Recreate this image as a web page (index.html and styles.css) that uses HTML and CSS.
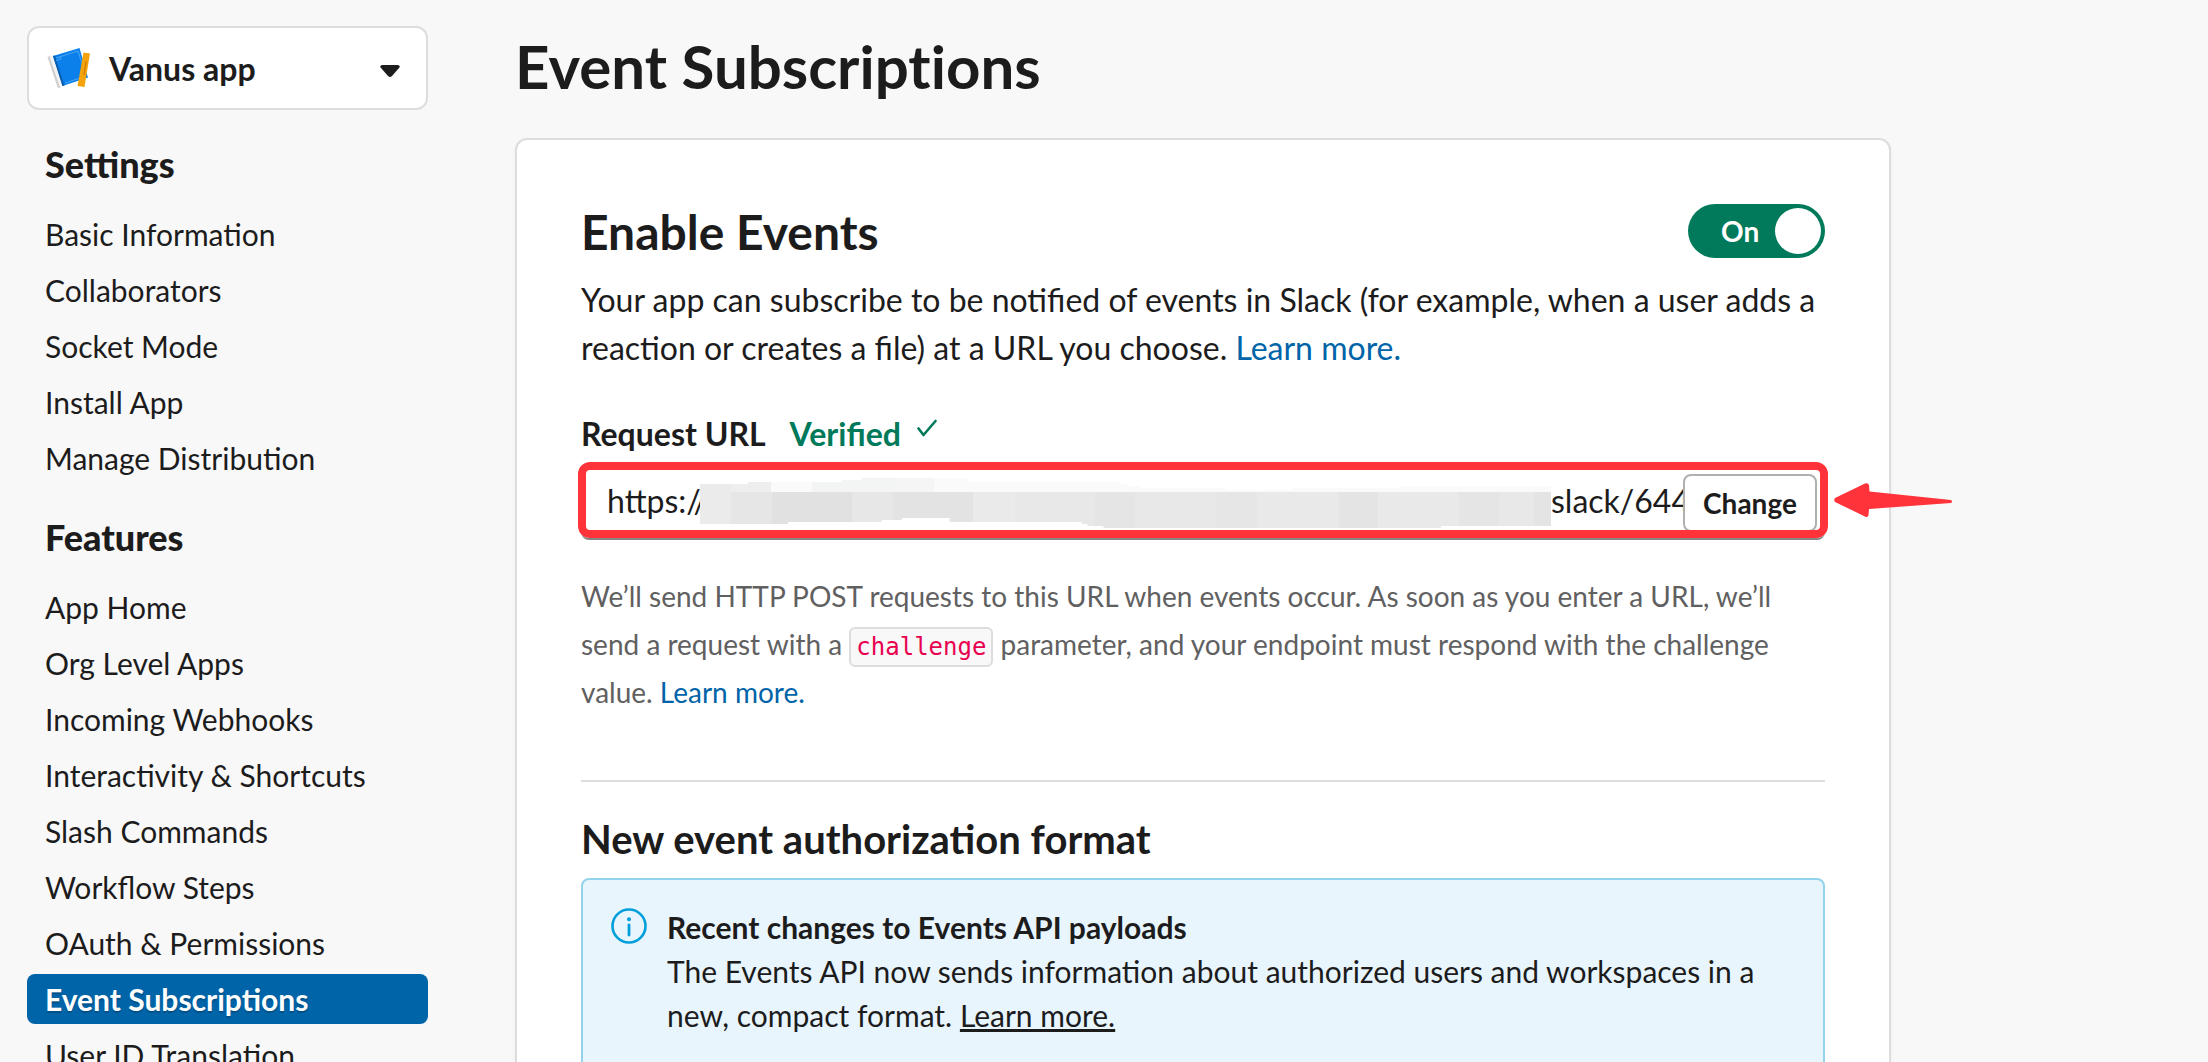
FILE: index.html
```html
<!DOCTYPE html>
<html lang="en">
<head>
<meta charset="utf-8">
<title>Event Subscriptions</title>
<link rel="stylesheet" href="styles.css">
</head>
<body>
<div class="page">
  <aside class="sidebar">
    <button class="app-picker" type="button">
      <svg class="app-icon" viewBox="0 0 44 44" aria-hidden="true">
        <path d="M0.500 11L4 9.500L15.500 39L12.500 42Q11 42.500 10.500 41Z" fill="#cfcfcf"/>
        <path d="M2.500 10.500L5.500 9.500L16 39.500L13 41.500Z" fill="#f3f3f3"/>
        <path d="M6 10L32.500 2L41 31.500L15.500 40Z" fill="#0b80ea"/>
        <path d="M6 10L7.800 9.500L17.500 39.500L15.500 40Z" fill="#0b5cad"/>
        <path d="M9 12L31 5L39 30L18 37M9 14.500L14 13L13 11" fill="none" stroke="#63b4f5" stroke-width="0.700"/>
        <path d="M36.500 6.500L43 7.500L37.500 41L30.500 40Z" fill="#f5a30a"/>
        <path d="M38.500 15L39.800 15.200L37.500 29L36.200 28.800Z" fill="#d07e08"/>
      </svg>
      <span>Vanus app</span>
      <svg class="caret" viewBox="0 0 20 12" aria-hidden="true">
        <path d="M2 0H18Q21 1 19 3L12 11Q10 13 8 11L1 3Q-1 1 2 0Z" fill="#1d1c1d"/>
      </svg>
    </button>

    <nav class="nav" aria-label="App configuration">
      <h2 class="nav-title">Settings</h2>
      <ul class="nav-list">
        <li><a class="nav-link" href="#">Basic Information</a></li>
        <li><a class="nav-link" href="#">Collaborators</a></li>
        <li><a class="nav-link" href="#">Socket Mode</a></li>
        <li><a class="nav-link" href="#">Install App</a></li>
        <li><a class="nav-link" href="#">Manage Distribution</a></li>
      </ul>
      <h2 class="nav-title">Features</h2>
      <ul class="nav-list">
        <li><a class="nav-link" href="#">App Home</a></li>
        <li><a class="nav-link" href="#">Org Level Apps</a></li>
        <li><a class="nav-link" href="#">Incoming Webhooks</a></li>
        <li><a class="nav-link" href="#">Interactivity &amp; Shortcuts</a></li>
        <li><a class="nav-link" href="#">Slash Commands</a></li>
        <li><a class="nav-link" href="#">Workflow Steps</a></li>
        <li><a class="nav-link" href="#">OAuth &amp; Permissions</a></li>
        <li><a class="nav-link nav-link--active" href="#" aria-current="page">Event Subscriptions</a></li>
        <li><a class="nav-link" href="#">User ID Translation</a></li>
      </ul>
    </nav>
  </aside>

  <main class="main">
    <h1 class="page-title">Event Subscriptions</h1>
    <section class="card">
      <div class="card-head">
        <h2 class="card-title">Enable Events</h2>
        <label class="toggle">
          <input class="toggle-input" type="checkbox" role="switch" checked aria-label="Enable Events">
          <span class="toggle-text">On</span>
          <span class="toggle-knob"></span>
        </label>
      </div>
      <p class="intro">Your app can subscribe to be notified of events in Slack (for example, when a user adds a reaction or creates a file) at a URL you choose. <a class="link" href="#">Learn more.</a></p>

      <div class="field-label">
        <label for="request-url">Request URL</label>
        <span class="verified">Verified</span>
        <svg class="check" viewBox="0 0 20 18" aria-hidden="true">
          <path d="M1.500 9.500L6.500 16L18.500 2" fill="none" stroke="#007a5a" stroke-width="2.600" stroke-linecap="round" stroke-linejoin="round"/>
        </svg>
      </div>
      <div class="field">
        <input class="url-input" id="request-url" type="text" value="https://" readonly>
        <svg class="redaction" viewBox="700 480 852 50" preserveAspectRatio="none" shape-rendering="crispEdges" aria-hidden="true">
          <defs>
            <clipPath id="redaction-outline">
              <path d="M700 486H748V484H842V482H862V480H968V484H1120V486H1128V488H1142V490H1226V492H1294V490H1402V488H1552V528H1442V530H1104V528H1088V526H1082V524H950V520H902V522H882V524H788V526H700Z"/>
            </clipPath>
          </defs>
          <g clip-path="url(#redaction-outline)">
            <rect x="700" y="480" width="852" height="50" fill="#fafafa"/>
            <rect x="700" y="480" width="71" height="50" fill="#eeeeee"/>
            <rect x="812" y="480" width="82" height="20" fill="#f3f4f4"/>
            <rect x="894" y="480" width="40" height="20" fill="#f5f5f5"/>
            <rect x="700" y="486" width="31" height="44" fill="#ebebeb"/>
            <rect x="731" y="494" width="41" height="36" fill="#e6e6e6"/>
            <rect x="772" y="494" width="80" height="36" fill="#e1e1e1"/>
            <rect x="852" y="494" width="41" height="36" fill="#e7e7e7"/>
            <rect x="893" y="494" width="80" height="36" fill="#e3e3e3"/>
            <rect x="973" y="494" width="42" height="36" fill="#eaeaea"/>
            <rect x="1015" y="494" width="80" height="36" fill="#e8e8e8"/>
            <rect x="1095" y="494" width="41" height="36" fill="#e5e5e5"/>
            <rect x="1136" y="494" width="81" height="36" fill="#e8e8e8"/>
            <rect x="1217" y="494" width="41" height="36" fill="#e6e6e6"/>
            <rect x="1258" y="494" width="82" height="36" fill="#e9e9e9"/>
            <rect x="1340" y="494" width="39" height="36" fill="#e4e4e4"/>
            <rect x="1379" y="494" width="81" height="36" fill="#e9e9e9"/>
            <rect x="1460" y="494" width="40" height="36" fill="#e5e5e5"/>
            <rect x="1500" y="494" width="35" height="36" fill="#e8e8e8"/>
            <rect x="1535" y="494" width="17" height="36" fill="#e4e4e4"/>
          </g>
        </svg>
        <span class="url-tail">slack/644</span>
        <button class="change" type="button">Change</button>
        <div class="highlight"></div>
        <svg class="arrow" viewBox="0 0 120 36" aria-hidden="true">
          <path d="M1 16L31 1.500Q34 0.500 35 3L35.500 9.500L117 18Q119 19.500 117 21L35 27L34.500 33Q34 36 31 34.500L1 20Q-0.500 18 1 16Z" fill="#ff3339"/>
        </svg>
      </div>
      <p class="hint">We’ll send HTTP POST requests to this URL when events occur. As soon as you enter a URL, we’ll send a request with a <code class="code">challenge</code> parameter, and your endpoint must respond with the challenge value. <a class="link" href="#">Learn more.</a></p>

      <hr class="divider">

      <h3 class="section-title">New event authorization format</h3>
      <div class="notice">
        <svg class="info" viewBox="0 0 36 36" aria-hidden="true">
          <circle cx="18" cy="18" r="16.500" fill="none" stroke="#009fdb" stroke-width="2.600"/>
          <circle cx="18" cy="11.200" r="2" fill="#009fdb"/>
          <path d="M18 17V27" stroke="#009fdb" stroke-width="2.800" stroke-linecap="round"/>
        </svg>
        <div>
          <strong class="notice-title">Recent changes to Events API payloads</strong>
          <p class="notice-text">The Events API now sends information about authorized users and workspaces in a new, compact format. <a class="notice-link" href="#">Learn more.</a></p>
        </div>
      </div>
    </section>
  </main>
</div>
</body>
</html>
```
FILE: styles.css
```css
* {
  box-sizing: border-box;
}

body {
  margin: 0;
  background: #f8f8f8;
  color: #1d1c1d;
  font-family: Lato, "Open Sans", sans-serif;
  font-size: 32px;
}

h1, h2, h3, p, ul {
  margin: 0;
}

button, input {
  font-family: inherit;
  color: inherit;
}

.page {
  display: flex;
  gap: 87px;
  height: 100vh;
  padding: 26px 27px 0;
  overflow: hidden;
}

/* Sidebar */
.sidebar {
  flex: 0 0 401px;
}

.app-picker {
  display: flex;
  align-items: center;
  gap: 18px;
  width: 100%;
  height: 84px;
  padding: 0 26px 0 18px;
  border: 2px solid #dddddd;
  border-radius: 12px;
  background: #ffffff;
  font-size: 32px;
  font-weight: 700;
}

.app-icon {
  width: 44px;
  height: 44px;
}

.caret {
  width: 20px;
  height: 12px;
  margin-top: 6px;
  margin-left: auto;
}

.nav-title {
  padding: 30px 18px 21px;
  font-size: 36px;
  font-weight: 900;
  line-height: 48px;
}

.nav-list {
  display: grid;
  gap: 6px;
  padding: 0;
  list-style: none;
}

.nav-link {
  display: block;
  padding: 0 18px;
  border-radius: 8px;
  color: inherit;
  font-size: 30px;
  line-height: 50px;
  text-decoration: none;
}

.nav-link--active {
  background: #0064a8;
  color: #ffffff;
  font-weight: 700;
  text-shadow: 0 2px 1px rgba(0, 0, 0, 0.2);
}

/* Main column */
.main {
  flex: 1;
  min-width: 0;
  max-width: 1376px;
}

.page-title {
  margin-bottom: 32px;
  font-size: 60px;
  font-weight: 700;
  line-height: 80px;
  font-variant-ligatures: none;
}

.card {
  padding: 64px;
  border: 2px solid #dddddd;
  border-radius: 12px;
  background: #ffffff;
  box-shadow: 0 2px 4px rgba(0, 0, 0, 0.04);
}

.card-head {
  display: flex;
  align-items: flex-start;
  justify-content: space-between;
}

.card-title {
  font-size: 48px;
  font-weight: 700;
  line-height: 56px;
}

.toggle {
  display: flex;
  align-items: center;
  justify-content: space-between;
  position: relative;
  width: 137px;
  height: 54px;
  padding: 0 4px 0 33px;
  border-radius: 27px;
  background: #007a5a;
  color: #ffffff;
  font-size: 28px;
  font-weight: 700;
}

.toggle-input {
  position: absolute;
  inset: 0;
  margin: 0;
  opacity: 0;
}

.toggle-knob {
  width: 46px;
  height: 46px;
  border-radius: 50%;
  background: #ffffff;
}

.intro {
  margin-top: 16px;
  line-height: 48px;
}

.link {
  color: #0064a8;
  text-decoration: none;
}

.field-label {
  display: flex;
  gap: 16px;
  margin-top: 38px;
  margin-bottom: 6px;
  font-weight: 700;
  line-height: 48px;
}

.verified {
  margin-left: 8px;
  color: #007a5a;
}

.check {
  width: 20px;
  height: 18px;
  margin-top: 9px;
}

.field {
  display: flex;
  align-items: center;
  position: relative;
  height: 76px;
  padding: 0 8px 0 26px;
  border-radius: 8px;
  border-bottom: 2px solid #868686;
  line-height: 48px;
}

.url-input {
  width: 93px;
  padding: 0;
  border: 0;
  background: transparent;
  font-size: 32px;
  line-height: 48px;
}

.redaction {
  flex: 1;
  min-width: 0;
  height: 50px;
  margin-top: 4px;
}

.url-tail {
  width: 132px;
}

.change {
  position: relative;
  width: 134px;
  height: 58px;
  margin-top: 4px;
  padding: 0;
  border: 2px solid #b0b0b0;
  border-radius: 8px;
  background: #ffffff;
  font-size: 28px;
  font-weight: 700;
}

/* Annotation drawn over the field */
.highlight {
  position: absolute;
  inset: -2px -3px 0;
  border: 8px solid #ff3339;
  border-radius: 12px;
  pointer-events: none;
}

.arrow {
  position: absolute;
  left: calc(100% + 9px);
  top: 18px;
  width: 120px;
  height: 36px;
}

.hint {
  margin-top: 32px;
  color: #616061;
  font-size: 28px;
  line-height: 48px;
}

.code {
  padding: 4px 5px;
  border: 2px solid #dddddd;
  border-radius: 6px;
  background: #f8f8f8;
  color: #e8004f;
  font-family: "DejaVu Sans Mono", monospace;
  font-size: 24px;
  line-height: 32px;
}

.divider {
  margin: 64px 0 0;
  border: 0;
  border-top: 2px solid #dddddd;
}

.section-title {
  margin: 30px 0 12px;
  font-size: 40px;
  font-weight: 700;
  line-height: 54px;
}

.notice {
  display: flex;
  gap: 20px;
  padding: 25px 30px 32px 28px;
  border: 2px solid #93d3ec;
  border-radius: 8px;
  background: #e8f5fd;
  font-size: 30px;
  line-height: 44px;
}

.info {
  flex: none;
  width: 36px;
  height: 36px;
  margin-top: 3px;
}

.notice-title {
  display: block;
}

.notice-link {
  color: inherit;
}
```
